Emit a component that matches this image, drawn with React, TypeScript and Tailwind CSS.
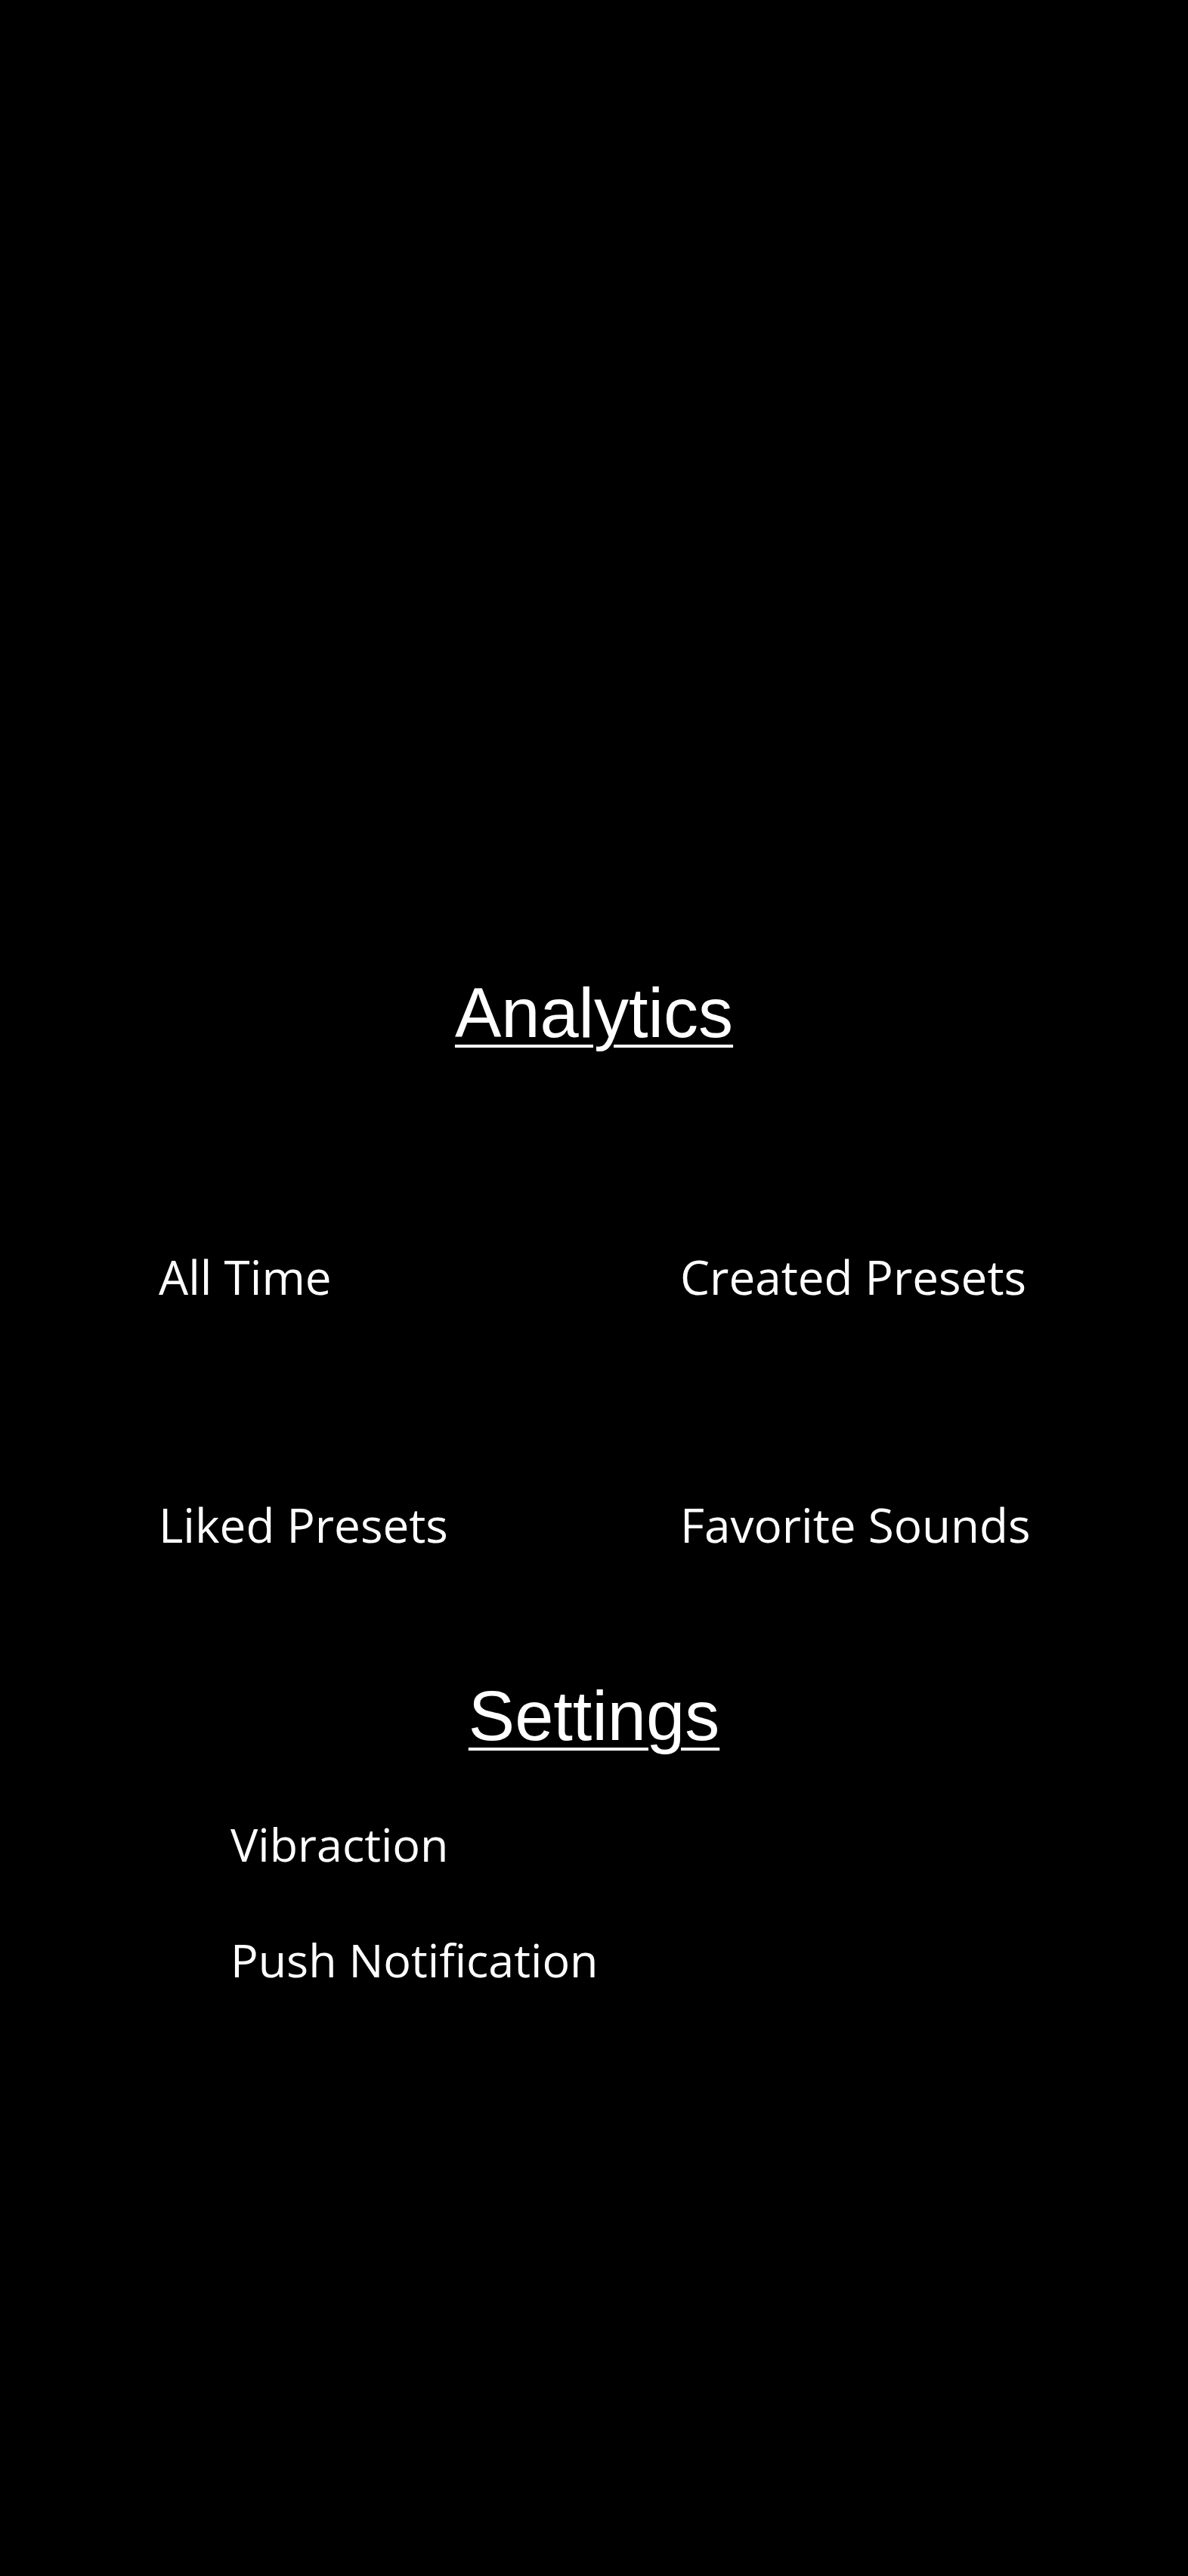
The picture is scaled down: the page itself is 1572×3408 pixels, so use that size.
import React from 'react';

const stats = [
    { label: 'All Time' },
    { label: 'Created Presets' },
    { label: 'Liked Presets' },
    { label: 'Favorite Sounds' },
];

const settings = ['Vibraction', 'Push Notification'];

const Heading: React.FC<{ children: React.ReactNode }> = ({ children }) => (
    <h2 className="text-center text-[92px] leading-none text-white underline decoration-[4px] underline-offset-[10px] font-['Liberation_Sans',sans-serif]">
        {children}
    </h2>
);

export default function App() {
    return (
        <div className="min-h-[3408px] w-full bg-black text-white font-['Open_Sans',sans-serif] [font-variant-ligatures:none]">
            {/* empty header area */}
            <div className="h-[1294px]" />

            <Heading>Analytics</Heading>

            <div className="mt-[270px] grid grid-cols-[690px_1fr] gap-y-[262px] pl-[210px]">
                {stats.map((s) => (
                    <div key={s.label} className="text-[62px] leading-[66px]">
                        {s.label}
                    </div>
                ))}
            </div>

            <div className="mt-[174px]">
                <Heading>Settings</Heading>
            </div>

            <div className="mt-[91px] flex flex-col gap-[87px] pl-[305px]">
                {settings.map((item) => (
                    <div key={item} className="text-[61px] leading-[66px]">
                        {item}
                    </div>
                ))}
            </div>
        </div>
    );
}
